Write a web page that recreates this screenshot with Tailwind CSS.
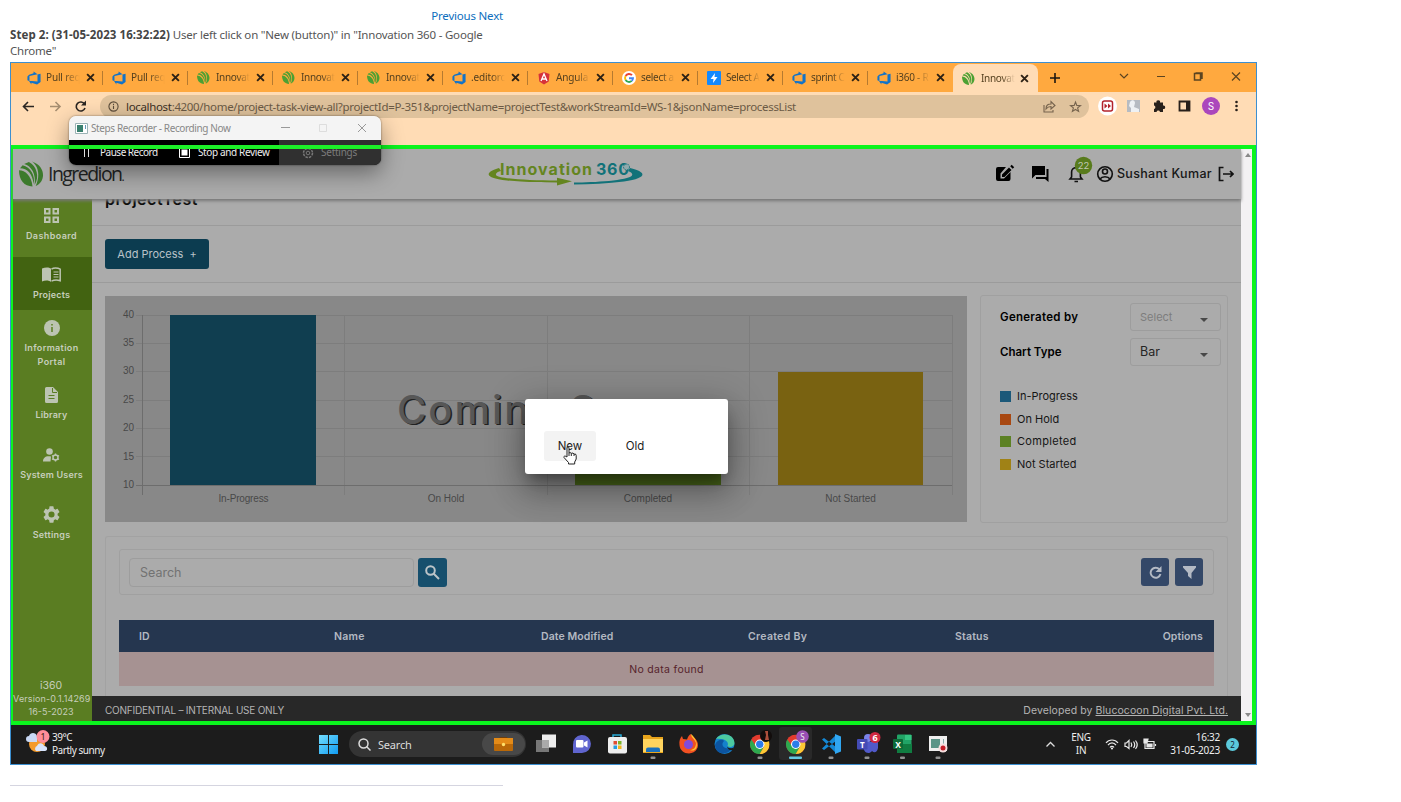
<!DOCTYPE html>
<html lang="en">
<head>
<meta charset="utf-8">
<title>Steps Recorder</title>
<script src="https://cdn.jsdelivr.net/npm/@tailwindcss/browser@4"></script>
</head>
<body class="bg-white w-[1401px] h-[802px] overflow-hidden font-['Noto_Sans',sans-serif]">
<svg class="hidden">
  <symbol id="devops" viewBox="0 0 16 16"><path fill="#1173c9" d="M15.500 3v9.500L11.500 15.500 5 13.500v2L2 11l10 .9V4zM12 3.800 7.500.5v2L2.400 4.200.5 6.200v4.500l2.300 1V5.800z"/></symbol>
  <symbol id="leaf" viewBox="0 0 24 24"><path d="M0 8.500C6 8.500 12 14 13 24 5 24 0 18 0 8.500z"/><path d="M1 6.500C8 6.500 13 12 14 21.500 16 14 11 5 3.500 3.500z"/><path d="M5 2.500C12 4.500 16.500 12 15 22.500 20 15 17 4 9.500.5z"/><path d="M12.500 0C19.500 5 20 15 16 23.500 25 20.500 27 5 12.500 0z"/></symbol>
  <symbol id="x" viewBox="0 0 8 8"><path d="M1 1l6 6M7 1L1 7" stroke="#2c2115" stroke-width="1.700"/></symbol>
  <symbol id="chrome" viewBox="0 0 24 24"><circle cx="12" cy="12" r="12" fill="#e33b2e"/><path fill="#2da94f" d="M1.600 6A12 12 0 0 0 12 24l5.200-9H8z"/><path fill="#fcc934" d="M22.400 6A12 12 0 0 1 12 24l5.200-9L14 6z"/><circle cx="12" cy="12" r="5.800" fill="#fff"/><circle cx="12" cy="12" r="4.500" fill="#2b7de9"/></symbol>
</svg>

<header class="w-[493px] ml-[10px] pt-[8px] text-[11.500px] leading-4">
  <nav class="text-right text-[#0d6ebd] text-[11.500px] tracking-[-0.200px]">Previous Next</nav>
  <p class="mt-[3px] text-[#555] tracking-[-0.200px] whitespace-nowrap"><b class="text-[#444] tracking-[0.070px]">Step 2: (31-05-2023 16:32:22)</b> User left click on "New (button)" in "Innovation 360 - Google<br>Chrome"</p>
</header>

<main class="relative ml-[10px] mt-[3px] w-[1247px] h-[703px] border border-[#3c8fd0] flex flex-col overflow-hidden">
  <!-- browser tabs -->
  <div class="h-[29px] shrink-0 bg-[#ffa93f] flex pl-[7px] text-[10px] tracking-[-0.150px] text-[#54401f] items-stretch">
    <div class="w-[85px] flex items-center pl-[9px] relative after:absolute after:right-0 after:top-2 after:h-[14px] after:w-px after:bg-[#b57a30]"><svg class="size-[14px]"><use href="#devops"/></svg><span class="ml-[5px] w-[34px] whitespace-nowrap mask-r-from-50%">Pull req</span><svg class="size-[9px] ml-[6px]"><use href="#x"/></svg></div>
    <div class="w-[85px] flex items-center pl-[9px] relative after:absolute after:right-0 after:top-2 after:h-[14px] after:w-px after:bg-[#b57a30]"><svg class="size-[14px]"><use href="#devops"/></svg><span class="ml-[5px] w-[34px] whitespace-nowrap mask-r-from-50%">Pull req</span><svg class="size-[9px] ml-[6px]"><use href="#x"/></svg></div>
    <div class="w-[85px] flex items-center pl-[9px] relative after:absolute after:right-0 after:top-2 after:h-[14px] after:w-px after:bg-[#b57a30]"><svg class="size-[13px] mr-px fill-[#4ca033]"><use href="#leaf"/></svg><span class="ml-[5px] w-[34px] whitespace-nowrap mask-r-from-60% tracking-[-0.300px]">Innovat</span><svg class="size-[9px] ml-[6px]"><use href="#x"/></svg></div>
    <div class="w-[85px] flex items-center pl-[9px] relative after:absolute after:right-0 after:top-2 after:h-[14px] after:w-px after:bg-[#b57a30]"><svg class="size-[13px] mr-px fill-[#4ca033]"><use href="#leaf"/></svg><span class="ml-[5px] w-[34px] whitespace-nowrap mask-r-from-60% tracking-[-0.300px]">Innovat</span><svg class="size-[9px] ml-[6px]"><use href="#x"/></svg></div>
    <div class="w-[85px] flex items-center pl-[9px] relative after:absolute after:right-0 after:top-2 after:h-[14px] after:w-px after:bg-[#b57a30]"><svg class="size-[13px] mr-px fill-[#4ca033]"><use href="#leaf"/></svg><span class="ml-[5px] w-[34px] whitespace-nowrap mask-r-from-60% tracking-[-0.300px]">Innovat</span><svg class="size-[9px] ml-[6px]"><use href="#x"/></svg></div>
    <div class="w-[85px] flex items-center pl-[9px] relative after:absolute after:right-0 after:top-2 after:h-[14px] after:w-px after:bg-[#b57a30]"><svg class="size-[14px]"><use href="#devops"/></svg><span class="ml-[5px] w-[34px] whitespace-nowrap mask-r-from-60%">.editorc</span><svg class="size-[9px] ml-[6px]"><use href="#x"/></svg></div>
    <div class="w-[85px] flex items-center pl-[9px] relative after:absolute after:right-0 after:top-2 after:h-[14px] after:w-px after:bg-[#b57a30]"><svg class="size-[14px]" viewBox="0 0 14 14"><path fill="#d6323a" d="M7 1l5.500 2-.8 7.500L7 13.500l-4.700-3L1.500 3z"/><path d="M4 10l3-7 3 7M5 8h4" fill="none" stroke="#fff" stroke-width="1.300"/></svg><span class="ml-[5px] w-[34px] whitespace-nowrap mask-r-from-60%">Angula</span><svg class="size-[9px] ml-[6px]"><use href="#x"/></svg></div>
    <div class="w-[85px] flex items-center pl-[9px] relative after:absolute after:right-0 after:top-2 after:h-[14px] after:w-px after:bg-[#b57a30]"><svg class="size-[14px]" viewBox="0 0 14 14" fill="none" stroke-width="1.900"><circle cx="7" cy="7" r="7" fill="#fff"/><path stroke="#ea4335" d="M3.600 5A4 4 0 0 1 10 4.200"/><path stroke="#fbbc05" d="M3.600 9a4 4 0 0 1 0-4"/><path stroke="#34a853" d="M9.700 9.900A4 4 0 0 1 3.600 9"/><path stroke="#4285f4" d="M7 7.200h4a4 4 0 0 1-1.300 2.700"/></svg><span class="ml-[5px] w-[34px] whitespace-nowrap mask-r-from-60% tracking-[-0.300px]">select a</span><svg class="size-[9px] ml-[6px]"><use href="#x"/></svg></div>
    <div class="w-[85px] flex items-center pl-[9px] relative after:absolute after:right-0 after:top-2 after:h-[14px] after:w-px after:bg-[#b57a30]"><svg class="size-[14px]" viewBox="0 0 14 14"><rect width="14" height="14" rx="1" fill="#1389fd"/><path fill="#fff" d="M8 2L3.500 8h3L6 12l4.500-6h-3z"/></svg><span class="ml-[5px] w-[34px] whitespace-nowrap mask-r-from-60% tracking-[-0.400px]">Select A</span><svg class="size-[9px] ml-[6px]"><use href="#x"/></svg></div>
    <div class="w-[85px] flex items-center pl-[9px] relative after:absolute after:right-0 after:top-2 after:h-[14px] after:w-px after:bg-[#b57a30]"><svg class="size-[14px]"><use href="#devops"/></svg><span class="ml-[5px] w-[34px] whitespace-nowrap mask-r-from-60% tracking-[-0.350px]">sprint C</span><svg class="size-[9px] ml-[6px]"><use href="#x"/></svg></div>
    <div class="w-[85px] flex items-center pl-[9px]"><svg class="size-[14px]"><use href="#devops"/></svg><span class="ml-[5px] w-[34px] whitespace-nowrap mask-r-from-50% tracking-[-0.250px]">i360 - R</span><svg class="size-[9px] ml-[6px]"><use href="#x"/></svg></div>
    <div class="w-[85px] flex items-center pl-[9px] bg-[#ffdcb5] rounded-t-lg mt-px"><svg class="size-[13px] mr-px fill-[#4ca033]"><use href="#leaf"/></svg><span class="ml-[5px] w-[34px] whitespace-nowrap mask-r-from-60% tracking-[-0.300px]">Innovat</span><svg class="size-[9px] ml-[5px]"><use href="#x"/></svg></div>
    <svg class="ml-[12px] mt-[10px] size-[10px]" viewBox="0 0 10 10"><path d="M5 0v10M0 5h10" stroke="#1d1710" stroke-width="1.600"/></svg>
    <svg class="ml-auto mr-[15px] mt-[8px] w-[124px] h-[12px]" viewBox="0 0 124 12" fill="none" stroke="#5c4420" stroke-width="1.200"><path d="M3 3l4 4 4-4M40 5.500h8"/><path stroke-width="1.500" d="M77.500 2.500h6v6.500h-6zM78.500 2h6.500v6"/><path d="M115 1.500l8 8M123 1.500l-8 8"/></svg>
  </div>
  <!-- address bar -->
  <div class="h-[53px] shrink-0 bg-[#ffdcb5] flex items-start pt-[3px]">
    <svg class="w-[89px] h-[24px]" viewBox="0 0 89 24" fill="none" stroke="#2b2622" stroke-width="1.600"><path d="M23 11.500H13M17 7l-4.500 4.500 4.500 4.500"/><path stroke="#a58d70" d="M39 11.500h10M44.500 7l4.500 4.500-4.500 4.500"/><path d="M73.500 9a4.500 4.500 0 1 0 .5 4"/><path fill="#2b2622" stroke="none" d="M75 5.500v5h-5z"/></svg>
    <div class="w-[989px] h-[23px] rounded-full bg-[#dfc29c] flex items-center pl-[8px] pr-[7px] text-[11.500px] text-[#6b5a45]">
      <svg class="size-[11px]" viewBox="0 0 12 12" fill="none" stroke="#5b4c3a" stroke-width="1.200"><circle cx="6" cy="6" r="5"/><path d="M6 5.200v3.500M6 3v1.300"/></svg>
      <span class="ml-[7px] tracking-[-0.330px] whitespace-nowrap"><span class="text-[#3c3024]">localhost</span>:4200/home/project-task-view-all?projectId=P-351&amp;projectName=projectTest&amp;workStreamId=WS-1&amp;jsonName=processList</span>
      <svg class="ml-auto w-[40px] h-[14px]" viewBox="0 0 40 14" fill="none" stroke="#76634d" stroke-width="1.100"><path d="M2 5v7h9v-2M4 9c0-4 2-5 5-5V1.500l4 4-4 3.500V6.500C7 6.500 5.500 7 4 9z"/><path d="M33.500 2l1.300 3.400 3.700.2-2.900 2.300 1 3.500-3.100-1.900-3.100 1.900 1-3.500-2.900-2.300 3.700-.2z"/></svg>
    </div>
    <svg class="ml-[8px] w-[148px] h-[22px]" viewBox="0 0 148 22"><circle cx="10.500" cy="11" r="9.500" fill="#fff"/><rect x="5.500" y="6" width="10" height="10" rx="2" fill="none" stroke="#b3232c" stroke-width="1.500"/><path fill="#b3232c" d="M7.500 8.500l3 2.500-3 2.500zM11 8.500l3 2.500-3 2.500z"/><rect x="30" y="5" width="13" height="12" fill="#b6bbc2"/><path fill="#eef1f4" d="M34 17v-4l-2-2 1-4c2-3 5-2 5 1l-1 4 5 2v3z"/><path fill="#28201a" d="M57 7.500h2.500a1.800 1.800 0 1 1 3.500 0H66v3a1.800 1.800 0 1 1 0 3.500v3h-3a1.800 1.800 0 0 0-3.500 0H57v-3a1.800 1.800 0 0 0 0-3.500z"/><path fill="none" stroke="#28201a" stroke-width="1.800" d="M82.500 6.500h10v9h-10z"/><path fill="#28201a" d="M89 6h4v10h-4z"/><circle cx="114" cy="11" r="9" fill="#ab47bc"/><text x="114" y="14.500" font-size="10" text-anchor="middle" fill="#fff" font-family="Roboto">S</text><g fill="#28201a"><circle cx="139.500" cy="7" r="1.300"/><circle cx="139.500" cy="11" r="1.300"/><circle cx="139.500" cy="15" r="1.300"/></g></svg>
  </div>
  <!-- recorded page -->
  <section class="h-[580px] shrink-0 border-t-4 border-b-4 border-l-2 border-r-4 border-[#0bf51e] flex font-[Inter,sans-serif]">
    <div class="w-[1228px] flex flex-col">
      <div class="h-[50px] shrink-0 bg-[#ababab] shadow-[0_2px_3px_#777] relative z-10 flex items-center">
        <svg class="ml-[6px] w-[25px] h-[26px] fill-[#3c7a2c]"><use href="#leaf"/></svg>
        <div class="ml-[4px] w-[78px] -mt-[1px] whitespace-nowrap text-[19.500px] font-['Open_Sans',sans-serif] text-[#222423] tracking-[-1.550px]">Ingredion<span class="text-[12px]">.</span></div>
        <svg class="ml-[361px] w-[156px] h-[28px]" viewBox="0 0 156 28"><path d="M12 8C-2 12-4 18 20 20.500c18 2 34 2 50 2v3l15-4.300-15-3.500v2.700c-30 0-60-2-61-5.500-.5-2 2-3.500 5-4z" fill="#64851f"/><path d="M143 8c17 4 18 10-6 13.500-16 2-34 3-50 3v-2c20 0 54-2 58-7 1-2-1-3.500-4-4.500z" fill="#127279"/><text x="13" y="14.500" font-family="Inter" font-weight="700" font-size="16" textLength="92" fill="#64851f">Innovation</text><text x="109" y="14.500" font-family="Inter" font-weight="700" font-size="16" textLength="33" fill="#127279">360</text><circle cx="139.500" cy="7" r="3" fill="#8fa9ac" stroke="#127279" stroke-dasharray="1.500 1"/></svg>
        <svg class="ml-auto w-[122px] h-[34px] mb-1" viewBox="0 0 122 34"><g><path d="M11 12H3a2 2 0 0 0-2 2v10a2 2 0 0 0 2 2h10.500a2 2 0 0 0 2-2v-7l-6.500 6.500H5.500v-5z"/><path d="M7 22v-2.500l7-7 2.500 2.500-7 7zM15.200 11.300l1.500-1.500 2.500 2.500-1.500 1.500z"/><path d="M37 11h13v9H40.500L37 23.500zM51.500 14h2v13l-3.500-3H41v-2h10.500z"/></g><path fill="none" stroke="#111" stroke-width="1.600" d="M75 24h12l-1.600-2v-5a4.400 4.400 0 0 0-8.800 0v5zM79.500 26.500h3.500"/><circle cx="88.500" cy="10.500" r="8.700" fill="#587b1c"/><text x="88.500" y="13.500" font-size="9.500" text-anchor="middle" fill="#c0c8b4" font-family="Inter">22</text><g fill="none" stroke="#111" stroke-width="1.600"><circle cx="110" cy="19" r="7.300"/><circle cx="110" cy="16.500" r="2.500"/><path d="M105 24c2-3 8-3 10 0"/></g></svg>
        <span class="ml-[0px] text-[12.500px] text-[#161616] tracking-[0.330px] font-medium">Sushant Kumar</span>
        <svg class="ml-[6px] mr-[7px] w-[16px] h-[16px]" viewBox="0 0 16 16" fill="none" stroke="#111" stroke-width="1.700"><path d="M5.500 1.500H1.500v13h4M5 8h10M12 5l3 3-3 3"/></svg>
      </div>
      <div class="grow flex min-h-0">
        <aside class="w-[79px] bg-[#5a7d22] text-[#c6cebb] text-[9px] font-semibold text-center flex flex-col">
          <div class="h-[58px] pt-[8px] pr-[2px] flex flex-col items-center"><svg class="size-[17px]" viewBox="0 0 17 17" fill="none" stroke="#bcc4b2" stroke-width="2"><path d="M2 2h4.500v4.500H2zM10.500 2H15v4.500h-4.500zM2 10.500h4.500V15H2zM10.500 10.500H15V15h-4.500z"/></svg><span class="mt-[5px] tracking-[0.400px]">Dashboard</span></div>
          <div class="h-[53px] bg-[#426311] pt-[10px] pr-[2px] flex flex-col items-center"><svg class="w-[19px] h-[15px]" viewBox="0 0 19 15"><path fill="#bcc4b2" d="M0 1.500C3 0 7 0 9 1.500V15C7 13 3 13 0 14.500z"/><path fill="none" stroke="#bcc4b2" stroke-width="1.500" d="M9.500 2.200c2-1.500 6-1.500 8.700 0v11.500c-3-1-6-1-8.700.5"/><path d="M11.500 5h5M11.500 7.500h5M11.500 10h5" stroke="#bcc4b2"/></svg><span class="mt-[6px] tracking-[0.200px]">Projects</span></div>
          <div class="h-[67px] pt-[10px] pr-[2px] flex flex-col items-center"><svg class="size-[16px]" viewBox="0 0 16 16"><circle cx="8" cy="8" r="8" fill="#bcc4b2"/><path stroke="#5a7d22" stroke-width="1.500" d="M8 7v5M8 4v1.500"/></svg><span class="mt-[5px] leading-[13.500px] tracking-[0.350px]">Information<br>Portal</span></div>
          <div class="h-[60px] pt-[10px] pr-[2px] flex flex-col items-center"><svg class="w-[13px] h-[16px]" viewBox="0 0 13 16"><path fill="#bcc4b2" d="M1.500 0H8l5 5v9.500a1.500 1.500 0 0 1-1.500 1.500h-10A1.500 1.500 0 0 1 0 14.500v-13A1.500 1.500 0 0 1 1.500 0z"/><path stroke="#5a7d22" d="M3.500 8.500h6M3.500 11.500h6M7.500 1v4.500H12" fill="none"/></svg><span class="mt-[5px] tracking-[0.150px]">Library</span></div>
          <div class="h-[60px] pt-[11px] pr-[2px] flex flex-col items-center"><svg class="w-[17px] h-[14px]" viewBox="0 0 17 14"><g fill="#bcc4b2"><circle cx="6.500" cy="3.500" r="3.300"/><path d="M0 13.500c0-4 3-6 8-5l-.5 5z"/></g><circle cx="12.500" cy="9.500" r="2.500" fill="none" stroke="#bcc4b2" stroke-width="1.500"/><path stroke="#bcc4b2" stroke-width="1.400" d="M12.500 5.500v2M12.500 11.500v2M9 7.500l1.700 1M14.300 10.500l1.700 1M9 11.500l1.700-1M14.300 8.500l1.700-1"/></svg><span class="mt-[6px] tracking-[0.200px] whitespace-nowrap">System Users</span></div>
          <div class="h-[60px] pt-[9px] pr-[2px] flex flex-col items-center"><svg class="size-[17px]" viewBox="2 2 20 20" fill="#bcc4b2"><path d="M19.140 12.940c.04-.3.060-.61.060-.94s-.02-.64-.07-.94l2.030-1.580a.49.49 0 0 0 .12-.61l-1.920-3.320a.49.49 0 0 0-.59-.22l-2.390.96c-.5-.38-1.030-.7-1.620-.94L14.400 2.810a.48.48 0 0 0-.48-.41h-3.840c-.24 0-.43.17-.47.41l-.36 2.540c-.59.24-1.130.57-1.620.94l-2.390-.96a.48.48 0 0 0-.59.22L2.740 8.870a.48.48 0 0 0 .12.61l2.030 1.580c-.05.3-.09.63-.09.94s.02.64.07.94l-2.030 1.580a.49.49 0 0 0-.12.61l1.920 3.320c.12.22.37.29.59.22l2.390-.96c.5.38 1.030.7 1.620.94l.36 2.540c.05.24.24.41.48.41h3.840c.24 0 .44-.17.47-.41l.36-2.540c.59-.24 1.130-.56 1.620-.94l2.390.96c.22.08.47 0 .59-.22l1.920-3.320a.48.48 0 0 0-.12-.61zM12 15.600A3.600 3.600 0 1 1 12 8.400a3.600 3.600 0 0 1 0 7.200z"/></svg><span class="mt-[5px] tracking-[0.250px]">Settings</span></div>
          <div class="mt-auto pb-[3px] pr-[3px] font-normal leading-[13px]"><div class="text-[10.500px]">i360</div><div class="whitespace-nowrap tracking-[0.150px]">Version-0.1.14269</div><div>16-5-2023</div></div>
        </aside>
        <div class="grow flex flex-col bg-[#ababab] min-w-0 overflow-hidden">
          <div class="h-[27px] shrink-0 border-b border-[#9b9b9b] pl-[13px]"><h1 class="-mt-[11px] text-[16px] leading-[22px] font-semibold text-[#0c0c0c] tracking-[0.550px]">projectTest</h1></div>
          <div class="h-[57px] shrink-0 border-b border-[#9b9b9b] pl-[13px] pt-[13px]"><button class="w-[104px] h-[30px] pt-px rounded-[3px] bg-[#0c3c50] text-[#b8c2c8] text-[11px] flex items-center justify-center gap-[6px]">Add Process <span>+</span></button></div>
          <div class="pt-[13px] pl-[13px] pr-[13px] flex gap-[13px] shrink-0">
            <svg class="w-[862px] h-[226px] bg-[#888]" viewBox="0 0 862 226" font-family="Liberation Sans" font-size="10" fill="#484848">
              <path fill="none" stroke="#7d7d7d" d="M31 19.500h816M31 47.500h816M31 75.500h816M31 104.500h816M31 132.500h816M31 160.500h816M239.500 19v180M442.500 19v180M644.500 19v180M847.500 19v180"/>
              <path fill="none" stroke="#6d6d6d" d="M31 189.500h816M37.500 19v180"/>
              <g text-anchor="end"><text x="29" y="22">40</text><text x="29" y="50">35</text><text x="29" y="78">30</text><text x="29" y="107">25</text><text x="29" y="135">20</text><text x="29" y="164">15</text><text x="29" y="192">10</text></g>
              <path fill="#103e50" d="M65 19h146v170H65z"/><path fill="#48641a" d="M470 132h146v57H470z"/><path fill="#796211" d="M673 76h145v113H673z"/>
              <g text-anchor="middle"><text x="138.500" y="206" textLength="50">In-Progress</text><text x="341" y="206">On Hold</text><text x="543" y="206">Completed</text><text x="745.500" y="206">Not Started</text></g>
              <g font-family="Inter" font-size="40" font-weight="500"><text x="293.500" y="128.800" fill="#222" textLength="277">Coming Soon</text><text x="292" y="127.500" fill="#575757" textLength="277">Coming Soon</text></g>
            </svg>
            <div class="w-[248px] h-[228px] -mt-px border border-[#a0a0a0] rounded-[3px] pl-[19px] pr-[6px] pt-[7px] text-[11.500px] text-[#151515]">
              <div class="flex items-center justify-between h-[28px] font-semibold text-black tracking-[0.280px]"><span class="pt-px">Generated by</span><div class="w-[91px] h-[28px] border border-[#9d9d9d] rounded-[3px] flex items-center justify-between pl-[9px] pr-[12px] pt-px font-normal text-[11px] text-[#7d7d7d] tracking-normal">Select<svg class="w-[8px] h-[4px] mt-1" viewBox="0 0 8 4"><path fill="#484848" d="M0 0h8L4 4z"/></svg></div></div>
              <div class="mt-[7px] flex items-center justify-between h-[28px] font-semibold text-black"><span class="pt-px">Chart Type</span><div class="w-[91px] h-[28px] border border-[#9d9d9d] rounded-[3px] flex items-center justify-between pl-[9px] pr-[12px] pt-px font-normal text-[12.500px] text-[#252525]">Bar<svg class="w-[8px] h-[4px] mt-1" viewBox="0 0 8 4"><path fill="#484848" d="M0 0h8L4 4z"/></svg></div></div>
              <ul class="mt-[19px] text-[11px]">
                <li class="h-[22.700px] flex items-center gap-[6px]"><i class="size-[11px] bg-[#1b5879]"></i>In-Progress</li>
                <li class="h-[22.700px] flex items-center gap-[6px]"><i class="size-[11px] bg-[#a84812]"></i>On Hold</li>
                <li class="h-[22.700px] flex items-center gap-[6px] tracking-[0.300px]"><i class="size-[11px] bg-[#5c8124]"></i>Completed</li>
                <li class="h-[22.700px] flex items-center gap-[6px]"><i class="size-[11px] bg-[#a08216]"></i>Not Started</li>
              </ul>
            </div>
          </div>
          <div class="mt-[13px] mx-[13px] grow border border-b-0 border-[#a2a2a2] rounded-t-[3px] px-[13px] pt-[12px] min-h-0">
            <div class="h-[46px] border border-[#a0a0a0] rounded-[3px] flex items-center pl-[9px] pr-[10px]">
              <div class="w-[285px] h-[29px] border border-[#9d9d9d] rounded-[4px] flex items-center pl-[10px] pt-[2px] text-[12.500px] text-[#727272]">Search</div>
              <div class="ml-[4px] size-[29px] rounded-[3px] bg-[#164f6d] grid place-items-center"><svg class="size-[15px]" viewBox="0 0 15 15" fill="none" stroke="#bcc4c8" stroke-width="2"><circle cx="5.500" cy="5.500" r="4.300"/><path d="M8.500 8.500l5.500 5.500"/></svg></div>
              <div class="ml-auto size-[28px] rounded-[3px] bg-[#344868] grid place-items-center"><svg class="size-[13px]" viewBox="0 0 13 13"><path fill="none" stroke="#b4bac4" stroke-width="1.900" d="M10.500 3.500a5 5 0 1 0 1 4.500"/><path fill="#b4bac4" d="M12.500 0v6h-6z"/></svg></div>
              <div class="ml-[6px] size-[28px] rounded-[3px] bg-[#344868] grid place-items-center"><svg class="size-[13px]" viewBox="0 0 13 13"><path fill="#b4bac4" d="M0 0h13v1.500L8.500 7v6L5 10V7L0 1.500z"/></svg></div>
            </div>
            <div class="mt-[25px] h-[32px] pt-px bg-[#25364f] text-[#b3b9c2] text-[10.500px] font-semibold grid grid-cols-[195px_207px_207px_207px_207px_1fr] items-center pl-[20px] pr-[11px]"><span>ID</span><span class="tracking-[0.300px]">Name</span><span class="tracking-[0.100px]">Date Modified</span><span class="tracking-[0.300px]">Created By</span><span class="tracking-[0.200px]">Status</span><span class="-ml-[1px] text-right tracking-[0.100px]">Options</span></div>
            <div class="h-[34px] pt-px bg-[#a69292] text-[#56222b] text-[10.500px] grid place-items-center tracking-[0.300px]">No data found</div>
          </div>
          <footer class="h-[25px] shrink-0 bg-[#282828] text-[#b4b4b4] text-[10.500px] px-[13px] pt-[4px] flex items-center justify-between"><span class="text-[10px] tracking-[-0.220px]">CONFIDENTIAL – INTERNAL USE ONLY</span><span class="tracking-[0.080px]">Developed by <u>Blucocoon Digital Pvt. Ltd.</u></span></footer>
        </div>
      </div>
    </div>
    <div class="grow bg-[#f3f1f3] flex flex-col justify-between items-center py-[4px] pl-[2px]"><svg class="w-[6px] h-[4px]" viewBox="0 0 6 4"><path fill="#898989" d="M0 4h6L3 0z"/></svg><svg class="w-[6px] h-[4px]" viewBox="0 0 6 4"><path fill="#898989" d="M0 0h6L3 4z"/></svg></div>
  </section>
  <!-- taskbar -->
  <div class="grow bg-[#1c1c1c] text-[#eee] text-[10px] flex items-center leading-[13px] pb-px">
    <svg class="ml-[15px] w-[24px] h-[26px] mb-1" viewBox="0 0 24 26"><circle cx="11" cy="15" r="8" fill="#f49a2b"/><path fill="#c9d8f5" d="M3 13a3 3 0 0 1 0-6c1-4 7-4 8 0v6z"/><path fill="#d8e4fb" d="M10 22a3 3 0 0 1 1-5c2-4 6-3 7 0 4 0 4 5 1 5z"/><circle cx="17" cy="7.500" r="6.500" fill="#ff8d99"/><text x="17" y="11" font-size="9" text-anchor="middle" fill="#321">1</text></svg>
    <div class="ml-[2px] w-[71px] mb-[1px] tracking-[-0.450px] whitespace-nowrap">39°C<br>Partly sunny</div>
    <svg class="ml-[196px] size-[19px]" viewBox="0 0 19 19"><defs><linearGradient id="w" x2="1" y2="1"><stop stop-color="#72ddff"/><stop offset="1" stop-color="#119bf2"/></linearGradient></defs><path fill="url(#w)" d="M0 0h9v9H0zM10 0h9v9h-9zM0 10h9v9H0zM10 10h9v9h-9z"/></svg>
    <div class="ml-[11px] w-[177px] h-[26px] rounded-full bg-[#343434] flex items-center pl-[9px] text-[11px] text-[#ddd]"><svg class="size-[13px]" viewBox="0 0 13 13" fill="none" stroke="#ddd" stroke-width="1.500"><circle cx="5.500" cy="5.500" r="4.500"/><path d="M8.500 8.500l4 4"/></svg><span class="ml-[7px] tracking-[-0.200px]">Search</span><div class="ml-auto mr-[1px] w-[43px] h-[22px] rounded-full bg-[#484848] grid place-items-center"><svg class="w-[19px] h-[14px]" viewBox="0 0 19 14"><path fill="none" stroke="#6d3d0b" d="M6 1V.5h7V1"/><rect y="1" width="19" height="13" rx="1" fill="#b96808"/><path fill="#e48b18" d="M0 1h19v6H0z"/><circle cx="9.500" cy="7.500" r="1.700" fill="#ffe06b"/></svg></div></div>
    <svg class="ml-[8px] w-[424px] h-[38px]" viewBox="534 725 424 38">
      <path fill="#777" d="M536 740h13v12h-13z"/><path fill="#eee" d="M542 734.500h14v13h-14z"/><path fill="#aaa" d="M542 740h7v7.500h-7z"/>
      <path fill="#6065cf" d="M573 753v-8a9 9 0 1 1 9 8z"/><rect x="576" y="740" width="7.500" height="7.500" rx="1" fill="#fff"/><path fill="#fff" d="M584 742.500l3.500-2v7l-3.500-2z"/>
      <path fill="none" stroke="#28aad6" stroke-width="1.500" d="M613 738v-3h8v3"/><rect x="608" y="737" width="19" height="16.500" rx="2" fill="#eee"/><path fill="#e14d32" d="M613.500 741h3.500v3.500h-3.500z"/><path fill="#7bb529" d="M618 741h3.500v3.500H618z"/><path fill="#259de1" d="M613.500 745.500h3.500v3.500h-3.500z"/><path fill="#f3b71c" d="M618 745.500h3.500v3.500H618z"/>
      <path fill="#e9a51c" d="M643 735h7l2 2h11v16h-20z"/><path fill="#ffd45e" d="M643 739h20v13h-20z"/><path fill="#1970bd" d="M646 752v-2.500q0-2 2-2h10q2 0 2 2v2.500z"/>
      <path fill="#f25022" d="M679.500 745c-.5-4 .5-7 2.500-9l1 3 4 .5c1-3 2-4.500 4-5.500 0 2 4 3 6 7 3 6-1 12-8 12.500-5 0-9-3-9.500-8.500z"/><path fill="#ffc52e" d="M691 734c0 4 4 5 5 9 0 5-3 7-6 7 8 3 10-8 1-16z"/><circle cx="688.500" cy="744.500" r="4.500" fill="#814bdb"/>
      <circle cx="724.500" cy="744" r="10" fill="#1481cc"/><path fill="#4cc9a0" d="M716 739c4-7 18-6 18.500 4 0 4-5 5-7 3 2-4-3-8-11.500-7z"/><path fill="#0c54a0" d="M715 745c2-6 8-6 9-4-4 4 0 9 8 7-5 9-17 6-17-3z"/><path fill="#1c1c1c" d="M727 746c0 2 4 3.500 7.500 1l-1.500 3c-3 1-6-1-6-4z"/>
      <use href="#chrome" x="750" y="734.500" width="19.500" height="19.500"/><circle cx="766" cy="736" r="6" fill="#120d0c"/><path fill="#ad4f3c" d="M765 731h3v4l1 5h-4l1-5z"/>
      <rect x="779" y="727" width="33" height="33" rx="3" fill="#292929"/><use href="#chrome" x="786" y="734.500" width="19.500" height="19.500"/><circle cx="802.500" cy="736.500" r="6.300" fill="#9a4fb5"/><text x="802.500" y="739.500" font-size="8" fill="#eee" text-anchor="middle">S</text>
      <path fill="#1489d6" d="M822 739.500l2-1.500 12 9v6zM822 748.500l2 1.500 12-9v-6z"/><path fill="#30a6f1" d="M835 734l6 2.500v15l-6 2.500z"/>
      <circle cx="868" cy="738" r="4" fill="#7b83eb"/><path fill="#5059c9" d="M864 742h14v6c-1 5-4 5-6 3-4 5-10 0-8-6z"/><rect x="857" y="739" width="10.500" height="10.500" rx="1" fill="#444bb5"/><text x="862.200" y="747.500" font-size="8" font-weight="700" fill="#fff" text-anchor="middle">T</text><circle cx="875" cy="737.500" r="5.500" fill="#d02741"/><text x="875" y="741" font-size="9" font-weight="700" fill="#fff" text-anchor="middle">6</text>
      <rect x="897" y="734.500" width="14.500" height="18.500" rx="1" fill="#21a366"/><path fill="#107c41" d="M897 744h15v9h-15z"/><path fill="#33c481" d="M905 735h6.500v5H905z"/><rect x="893" y="739" width="10" height="10" rx="1" fill="#0d6a37"/><text x="898" y="747.500" font-size="8.500" font-weight="700" fill="#fff" text-anchor="middle">X</text>
      <path fill="#eee" d="M929 736h18v15h-18z"/><path fill="#5b9487" d="M931 739h9v9h-9z"/><path stroke="#8aa" d="M943.500 739v7"/><circle cx="943" cy="748" r="4.500" fill="#f5dddd"/><circle cx="943" cy="748" r="2.500" fill="#c31c26"/>
      <g fill="#929292"><rect x="650.500" y="756.500" width="5" height="2.500" rx="1"/><rect x="757.500" y="756.500" width="5" height="2.500" rx="1"/><rect x="828.500" y="756.500" width="5" height="2.500" rx="1"/><rect x="864.500" y="756.500" width="5" height="2.500" rx="1"/><rect x="900" y="756.500" width="5" height="2.500" rx="1"/><rect x="935.500" y="756.500" width="5" height="2.500" rx="1"/></g><rect x="789" y="756.500" width="13" height="2.500" rx="1" fill="#64c9e3"/>
    </svg>
    <svg class="ml-auto w-[9px] h-[6px]" viewBox="0 0 9 6"><path fill="none" stroke="#ddd" stroke-width="1.300" d="M.5 5.500l4-4 4 4"/></svg>
    <div class="ml-[16px] w-[20px] text-center tracking-[-0.300px]">ENG<br>IN</div>
    <svg class="ml-[14px] w-[52px] h-[13px]" viewBox="0 0 52 13" fill="none" stroke="#e8e8e8" stroke-width="1.200"><path d="M1 5c3-4 9-4 12 0M3 7.200c2-3 6-3 8 0M5 9.500c1-1.500 3-1.500 4 0"/><circle cx="7" cy="10.500" r=".5"/><path d="M20 5v3.500h1.500l2.500 2v-8L21.500 5zM26 4.500c1 1.500 1 3 0 4.500M28.500 3.500c1.500 2 1.500 4.500 0 6.500M30.500 2.500c2 2.500 2 6 0 8.500"/><path d="M40 3.500h9v7h-9zM50.500 6v2"/><path fill="#e8e8e8" d="M42 6h5v3h-5zM39 1h4l-1 4h-3z"/></svg>
    <div class="ml-[7px] w-[56px] text-right whitespace-nowrap tracking-[-0.250px]">16:32<br>31-05-2023</div>
    <div class="ml-[6px] mr-[17px] size-[13px] rounded-full bg-[#5cc9db] text-[#123] text-[8px] grid place-items-center">2</div>
  </div>

  <!-- recorder window floating over the browser -->
  <div class="absolute z-20 left-[58px] top-[53px] w-[312px] h-[49px] rounded-[7px] overflow-hidden shadow-[0_8px_22px_#0006,0_0_2px_#0008] font-['Noto_Sans',sans-serif] text-[10px]">
    <div class="h-[24px] bg-[#f4f4f4] text-[#888] flex items-center pl-[6px]"><svg class="w-[13px] h-[11px]" viewBox="0 0 13 11"><path fill="#fff" stroke="#9bb3b5" d="M.5.5h12v10H.5z"/><path fill="#39806e" d="M2 2h6v7H2z"/><path stroke="#69b" d="M10.500 2v4"/></svg><span class="ml-[3px] tracking-[-0.380px]">Steps Recorder - Recording Now</span><svg class="ml-auto mr-[14px] w-[86px] h-[10px]" viewBox="0 0 86 10" fill="none" stroke="#999"><path d="M0 4.500h9M77 1l8 8M85 1l-8 8"/><path stroke="#ddd" d="M38.500 1.500h7v7h-7z"/></svg></div>
    <div class="h-[25px] bg-black text-[#eee] flex items-center"><svg class="ml-[15px] w-[5px] h-[9px]"><path d="M.5 0v9M4.500 0v9" stroke="#ddd"/></svg><span class="ml-[11px] w-[58px] whitespace-nowrap tracking-[-0.500px]">Pause Record</span><svg class="ml-[21px] size-[11px]" viewBox="0 0 11 11"><path fill="none" stroke="#fff" d="M.5.5h10v10H.5z"/><path fill="#fff" d="M2.500 2.500h6v6h-6z"/></svg><span class="ml-[8px] whitespace-nowrap tracking-[-0.370px]">Stop and Review</span><div class="ml-auto w-[102px] h-full bg-[#303030] text-[#7c7c7c] flex items-center pl-[23px]"><svg class="size-[12px]" viewBox="0 0 12 12" fill="none" stroke="#777"><circle cx="6" cy="6" r="1.800"/><circle cx="6" cy="6" r="4.500" stroke-width="1.500" stroke-dasharray="2.500 1"/></svg><span class="ml-[7px] tracking-[-0.250px]">Settings</span></div></div>
    <div class="absolute top-[29px] left-0 w-full h-[4px] bg-[#1cf028]"></div>
  </div>

  <!-- dialog -->
  <div class="absolute left-[514px] top-[336px] w-[203px] h-[75px] rounded-[3px] bg-white shadow-[0_9px_12px_-5px_#0005,0_19px_30px_2px_#0003,0_7px_36px_6px_#0003] font-[Inter,sans-serif] text-[11.500px] text-[#1c1c1c] flex items-start pt-[32px] pl-[19px]">
    <div class="w-[52px] h-[30px] pt-[2px] rounded-[3px] bg-[#f3f3f3] grid place-items-center">New</div>
    <div class="ml-[13px] w-[52px] h-[30px] pt-[2px] grid place-items-center">Old</div>
    <svg class="absolute left-[37px] top-[47px] w-[16px] h-[19px]" viewBox="0 0 16 19"><path fill="#fff" stroke="#222" d="M5 11V2c0-1.500 2-1.500 2 0v5l1-.5 1.300.8L11 7l1 1.200 1.500-.2.7 1.500V13l-1.500 3v2H6.500v-1.500L2 11.500c-.5-1.500 1-2 3-.5zM7 7v3M9.300 7.500V10M12 8.200V10"/></svg>
  </div>
</main>
<hr class="ml-[10px] mt-[20px] w-[493px] border-t border-[#d5d5e0]">
</body>
</html>
